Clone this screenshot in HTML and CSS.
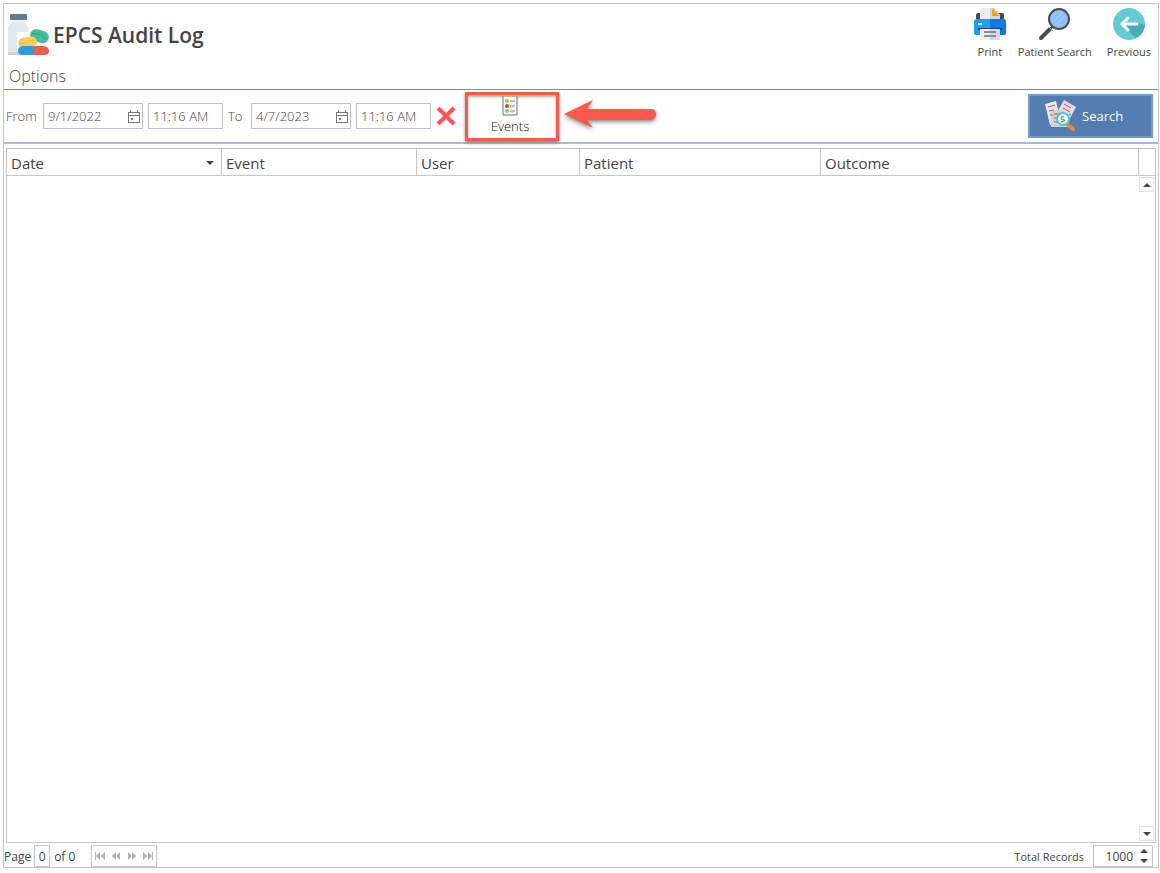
FILE: index.html
```html
<!DOCTYPE html>
<html lang="en">
    <head>
        <meta charset="utf-8">
        <title>EPCS Audit Log</title>
        <link rel="stylesheet" href="styles.css">
    </head>
    <body>
        <main class="panel">
            <header class="header">
                <div class="title-row">
                    <svg class="logo" viewBox="0 0 41 43" aria-hidden="true">
                        <rect x="2" y="1" width="17" height="6" rx="1" fill="#637a8f"/>
                        <path d="M4 7h13v3q3 2 3 6v26H0V16q0-4 4-6z" fill="#e3e8ea"/>
                        <path d="M4 7h13v3q-6-2-13 0z" fill="#f1f3f4"/>
                        <path d="M9 21q0-2 2-2h9v23H9z" fill="#fff"/>
                        <path d="M0 39h12v3H0z" fill="#cdd4d8"/>
                        <rect x="22" y="17" width="19" height="12" rx="6" transform="rotate(18 31 23)" fill="#40bd9b"/>
                        <path d="M24 20q8 0 14 6" stroke="#30a382" fill="none"/>
                        <rect x="10" y="24" width="19" height="11" rx="6" transform="rotate(-8 19 29)" fill="#fbcf5b"/>
                        <path d="M12 31q7-4 15-3" stroke="#e8b947" fill="none"/>
                        <path d="M14 33h12v9H14q-4 0-4-4t4-5z" fill="#25a0dc"/>
                        <path d="M25 33h11q5 1 5 5t-5 4H25z" fill="#e66150"/>
                    </svg>
                    <h1>EPCS Audit Log</h1>
                </div>
                <nav class="actions">
                    <button class="action" type="button">
                        <svg viewBox="0 0 32 32" aria-hidden="true">
                            <path d="M4 5h24q2 0 2 2v6H2V7q0-2 2-2z" fill="#3f4a5e"/>
                            <path d="M6 0h14l6 7v5H6z" fill="#eceef4"/>
                            <path d="M16 0h4l6 7v5H16z" fill="#d3d7e2"/>
                            <path d="M18 0l8 8h-8z" fill="#ff9f22"/>
                            <path d="M3 11h26q3 0 3 3v11q0 2-2 2H2q-2 0-2-2V14q0-3 3-3z" fill="#1aa0fa"/>
                            <path d="M16 11h13q3 0 3 3v11q0 2-2 2H16z" fill="#087ce8"/>
                            <path d="M4 16h4" stroke="#fff" stroke-width="2"/>
                            <path d="M4 20h24v2H4z" fill="#34425b"/>
                            <path d="M6 21h20v11H6z" fill="#eceef4"/>
                            <path d="M16 21h10v11H16z" fill="#d5dae6"/>
                            <path d="M10 24h12M10 28h12" stroke="#868b98" stroke-width="2"/>
                        </svg>
                        Print
                    </button>
                    <button class="action" type="button">
                        <svg viewBox="0 0 32 32" aria-hidden="true">
                            <path d="M15 17l-5 5" stroke="#555" stroke-width="2"/>
                            <path d="M11 21l-9 9" stroke="#4c4c4c" stroke-width="4" stroke-linecap="round"/>
                            <path d="M10 19l4 4" stroke="#9ab85b" stroke-width="1"/>
                            <circle cx="20" cy="11" r="10" fill="#8cc1fc" stroke="#4b4c50" stroke-width="2"/>
                            <path d="M14 14l9-9M18 16l8-8" stroke="#a9d2ff" stroke-width="1"/>
                        </svg>
                        Patient Search
                    </button>
                    <button class="action" type="button">
                        <svg viewBox="0 0 32 32" aria-hidden="true">
                            <circle cx="16" cy="16" r="16" fill="#62cbd4"/>
                            <path d="M9 17l14 13a16 16 0 0 0 9-13L25 15l-9 3z" fill="#4aabb6"/>
                            <path d="M24 16H9M15 10l-6 6 6 6" stroke="#fff" stroke-width="3" fill="none" stroke-linecap="round" stroke-linejoin="round"/>
                        </svg>
                        Previous
                    </button>
                </nav>
            </header>
            <h2 class="options">Options</h2>

            <form class="toolbar">
                <label for="from-date">From</label>
                <div class="date-box">
                    <input id="from-date" type="text" value="9/1/2022">
                    <button type="button" aria-label="Pick start date">
                        <svg viewBox="0 0 13 13" shape-rendering="crispEdges"><path d="M1 2h11v10H1zM1 5h11M3 0v3M10 0v3" /><path d="M4 8h1v1H4z"/></svg>
                    </button>
                </div>
                <input class="time" type="text" value="11:16 AM" aria-label="Start time">
                <label for="to-date">To</label>
                <div class="date-box">
                    <input id="to-date" type="text" value="4/7/2023">
                    <button type="button" aria-label="Pick end date">
                        <svg viewBox="0 0 13 13" shape-rendering="crispEdges"><path d="M1 2h11v10H1zM1 5h11M3 0v3M10 0v3" /><path d="M4 8h1v1H4z"/></svg>
                    </button>
                </div>
                <input class="time" type="text" value="11:16 AM" aria-label="End time">
                <button class="clear" type="button" aria-label="Clear dates">
                    <svg viewBox="0 0 20 20"><path d="M2 2l16 16M18 2L2 18" stroke="#ff5558" stroke-width="4"/></svg>
                </button>
                <button class="events" type="button">
                    <svg viewBox="0 0 16 20" aria-hidden="true">
                        <path d="M1 0h14v19H1z" fill="#fff" stroke="#687282"/>
                        <path d="M5 0h6v1H5z" fill="#e8b33c"/>
                        <circle cx="5" cy="5" r="2" fill="#8fd04e"/>
                        <circle cx="5" cy="10" r="2" fill="#e8344e"/>
                        <circle cx="5" cy="15" r="2" fill="#8fd04e"/>
                        <path d="M8 5h5M8 10h5M8 15h5" stroke="#7b8492"/>
                        <path d="M8 6h3M8 11h3M8 16h3" stroke="#b7bdc6"/>
                    </svg>
                    Events
                </button>
                <svg class="arrow" viewBox="0 0 94 34" aria-hidden="true">
                    <path d="M0 15L29 1l-6 9h64q5 0 5 5t-5 6H23l6 8z" fill="#fb5a4b"/>
                </svg>
                <button class="search" type="submit">
                    <svg viewBox="0 0 32 32" aria-hidden="true">
                        <path d="M0 4l11-3 5 21-11 3z" fill="#e9e9ec"/>
                        <path d="M19 0l12 7-9 17-12-8z" fill="#dedee2"/>
                        <path d="M6 10h12l5 5v12H6z" fill="#cfd2d8"/>
                        <path d="M3 7l7-2M4 11l5-1M5 15h3M19 4l7 4M18 8l7 4M24 14l2 1" stroke="#e3444e" stroke-width="1"/>
                        <path d="M9 14h5M9 18h3M9 22h3" stroke="#e3444e" stroke-width="1"/>
                        <path d="M22 24l6 5" stroke="#f58a32" stroke-width="4" stroke-linecap="round"/>
                        <circle cx="18" cy="19" r="6" fill="#f3fbfc" stroke="#3ecbd8" stroke-width="2"/>
                        <path d="M19 17q-3-1-3 1t3 2-3 2" stroke="#55636b" fill="none"/>
                    </svg>
                    Search
                </button>
            </form>

            <section class="grid">
                <table>
                    <thead>
                        <tr>
                            <th class="col-date"><div>Date <svg viewBox="0 0 8 4" aria-hidden="true"><path d="M0 0h8L4 4z"/></svg></div></th>
                            <th class="col-event">Event</th>
                            <th class="col-user">User</th>
                            <th class="col-patient">Patient</th>
                            <th>Outcome</th>
                            <td class="col-scroll"></td>
                        </tr>
                    </thead>
                    <tbody></tbody>
                </table>
                <div class="scrollbar">
                    <button type="button" aria-label="Scroll up"><svg viewBox="0 0 8 4"><path d="M0 4h8L4 0z"/></svg></button>
                    <button type="button" aria-label="Scroll down"><svg viewBox="0 0 8 4"><path d="M0 0h8L4 4z"/></svg></button>
                </div>
            </section>

            <footer class="footer">
                <label for="page">Page</label>
                <input id="page" class="page" type="text" value="0">
                <span>of 0</span>
                <div class="pager">
                    <button type="button" aria-label="First page"><svg viewBox="0 0 10 8"><path d="M0 0h1v8H0zM5 0v8L1 4zM10 0v8L6 4z"/></svg></button>
                    <button type="button" aria-label="Previous page"><svg viewBox="0 0 10 8"><path d="M5 0v8L1 4zM9 0v8L5 4z"/></svg></button>
                    <button type="button" aria-label="Next page"><svg viewBox="0 0 10 8"><path d="M1 0v8l4-4zM5 0v8l4-4z"/></svg></button>
                    <button type="button" aria-label="Last page"><svg viewBox="0 0 10 8"><path d="M9 0h1v8H9zM0 0v8l4-4zM5 0v8l4-4z"/></svg></button>
                </div>
                <label class="total" for="total">Total Records</label>
                <div class="spinner">
                    <input id="total" type="text" value="1000">
                    <div class="steps">
                        <button type="button" aria-label="More"><svg viewBox="0 0 8 4"><path d="M0 4h8L4 0z"/></svg></button>
                        <button type="button" aria-label="Fewer"><svg viewBox="0 0 8 4"><path d="M0 0h8L4 4z"/></svg></button>
                    </div>
                </div>
            </footer>
        </main>
    </body>
</html>
```
FILE: styles.css
```css
*{
    box-sizing: border-box;
}
body{
    margin: 0;
    padding: 3px 1px 5px 3px;
    height: 100vh;
    background-color: #fff;
    color: #444;
    font-family: "Open Sans", "Noto Sans", sans-serif;
    font-size: 13px;
}
button, input{
    margin: 0;
    padding: 0;
    border: 0;
    background: none;
    color: inherit;
    font: inherit;
}
input{
    min-width: 0;
}
svg{
    display: block;
    flex: none;
}

.panel{
    display: flex;
    flex-direction: column;
    height: 100%;
    border: 1px solid #c6c6c6;
}

/* title and top right buttons */
.header{
    display: flex;
    justify-content: space-between;
    height: 60px;
    padding: 4px 7px 0 4px;
}
.title-row{
    display: flex;
    align-items: center;
    gap: 4px;
    padding-bottom: 4px;
}
.logo{
    width: 41px;
    height: 43px;
}
h1{
    margin: 0;
    padding-top: 2px;
    font-size: 21px;
    font-weight: 600;
}
.actions{
    display: flex;
    align-items: flex-start;
    gap: 15px;
}
.action{
    display: flex;
    flex-direction: column;
    align-items: center;
    gap: 4px;
    font-size: 11px;
    line-height: 15px;
}
.action:first-child{
    width: 26px;
}
.action svg{
    width: 32px;
    height: 32px;
}
.options{
    margin: 0;
    padding: 0 5px;
    border-bottom: 1px solid #6a8fc4;
    font-size: 16px;
    font-weight: 300;
    line-height: 25px;
}

/* filter row */
.toolbar{
    display: flex;
    align-items: center;
    gap: 5px;
    height: 54px;
    padding: 0 5px 0 2px;
    border-bottom: 2px solid #a6bcdc;
    font-weight: 300;
}
.toolbar label{
    min-width: 18px;
}
.toolbar label:first-child{
    min-width: 32px;
}
.date-box, .time{
    height: 26px;
    border: 1px solid #c0c0c0;
}
.date-box{
    display: flex;
    align-items: center;
    width: 100px;
    padding: 0 2px 0 4px;
}
.date-box input{
    flex: 1;
}
.date-box svg{
    width: 13px;
    height: 13px;
    fill: none;
    stroke: #777;
}
.time{
    width: 75px;
    padding: 0 4px;
}
.clear svg{
    width: 20px;
    height: 20px;
}
.events{
    display: flex;
    flex-direction: column;
    align-items: center;
    justify-content: center;
    width: 94px;
    height: 49px;
    margin-left: 4px;
    padding-right: 4px;
    border: 3px solid #fb5a4b;
    box-shadow: 0 2px 3px #888, inset 0 2px 3px #aaa;
    color: #111;
    line-height: 20px;
}
.events svg{
    width: 16px;
    height: 20px;
}
.arrow{
    width: 94px;
    height: 34px;
    filter: drop-shadow(0 2px 2px #888);
}
.search{
    display: flex;
    align-items: center;
    gap: 5px;
    width: 125px;
    height: 44px;
    margin-left: auto;
    padding-left: 15px;
    border: 2px solid #7899c9;
    background-color: #537cb1;
    color: #fff;
    font-weight: 400;
}
.search svg{
    width: 32px;
    height: 32px;
}

/* result grid */
.grid{
    flex: 1;
    display: flex;
    flex-direction: column;
    margin: 4px 2px 0;
    border: 1px solid #c6c6c6;
}
table{
    width: 100%;
    border-collapse: separate;
    border-spacing: 0;
    table-layout: fixed;
}
th, td{
    height: 27px;
    padding: 1px 4px 0;
    border-right: 1px solid #c6c6c6;
    border-bottom: 1px solid #c6c6c6;
    font-size: 15px;
    font-weight: 400;
    text-align: left;
}
td{
    border-right: 0;
}
th div{
    display: flex;
    align-items: center;
    justify-content: space-between;
    padding-right: 3px;
}
th svg, .scrollbar svg, .steps svg{
    width: 8px;
    height: 4px;
    fill: #444;
}
.col-date{
    width: 215px;
}
.col-event{
    width: 195px;
}
.col-user{
    width: 163px;
}
.col-patient{
    width: 241px;
}
.col-scroll{
    width: 16px;
}
.scrollbar{
    flex: 1;
    display: flex;
    flex-direction: column;
    justify-content: space-between;
    align-self: flex-end;
    width: 16px;
    padding: 1px 1px 1px 0;
}
.scrollbar button{
    display: flex;
    align-items: center;
    justify-content: center;
    height: 15px;
    border: 1px solid #e2e2e2;
}

/* paging */
.footer{
    display: flex;
    align-items: center;
    height: 24px;
    padding: 2px 5px 0 0;
    font-size: 12px;
}
.page{
    width: 16px;
    height: 22px;
    margin: 0 4px 0 3px;
    border: 1px solid #c6c6c6;
    text-align: center;
}
.pager{
    display: flex;
    align-items: center;
    justify-content: space-around;
    width: 66px;
    height: 22px;
    margin-left: 16px;
    border: 1px solid #c6c6c6;
}
.pager svg{
    width: 10px;
    height: 8px;
    fill: #b0b0b0;
}
.total{
    margin-left: auto;
    font-size: 11px;
}
.spinner{
    display: flex;
    align-items: center;
    width: 60px;
    height: 22px;
    margin-left: 9px;
    padding-right: 4px;
    border: 1px solid #c6c6c6;
}
.spinner input{
    flex: 1;
    padding-right: 7px;
    text-align: right;
}
.steps{
    display: flex;
    flex-direction: column;
    gap: 6px;
}
.steps button{
    display: block;
}
```
